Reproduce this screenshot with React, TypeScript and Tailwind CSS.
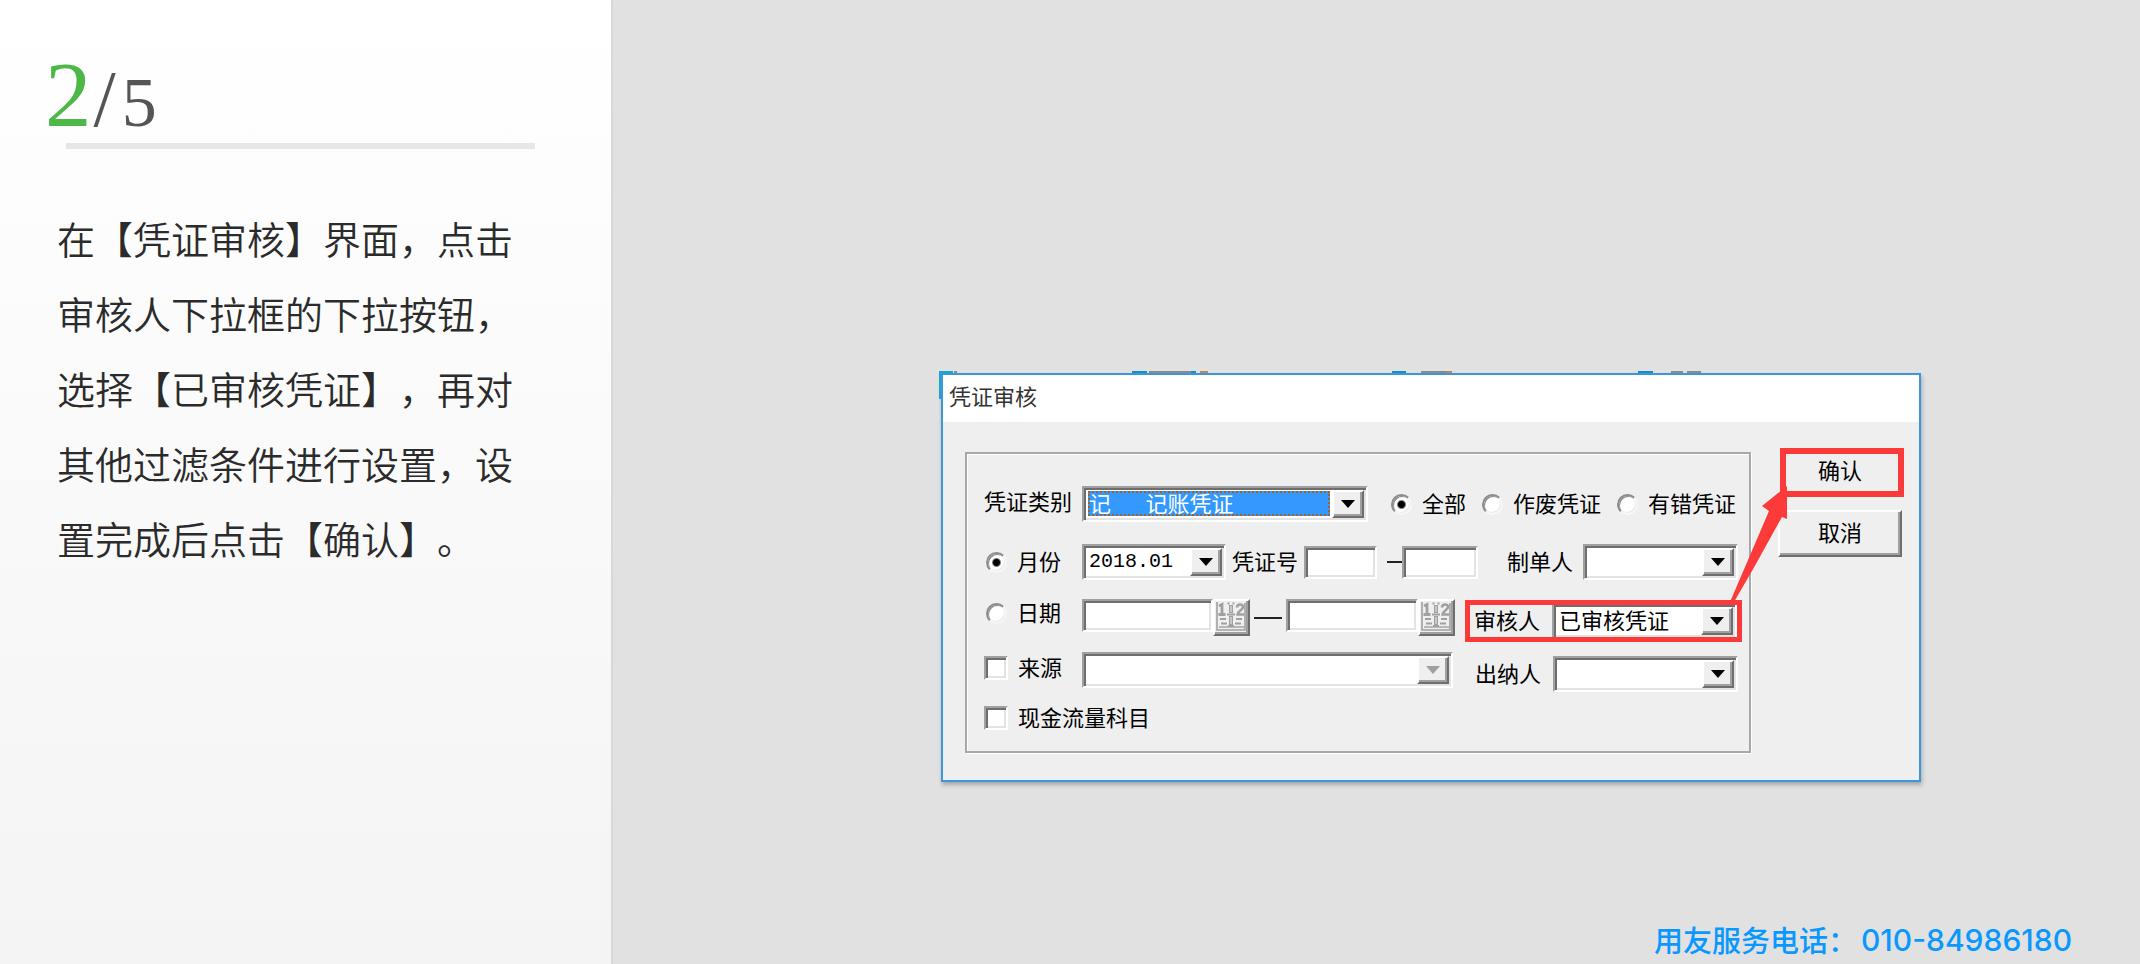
import React from 'react';

const steps = [
  '在【凭证审核】界面，点击',
  '审核人下拉框的下拉按钮，',
  '选择【已审核凭证】，再对',
  '其他过滤条件进行设置，设',
  '置完成后点击【确认】。',
];

const sunken =
  'border-2 border-t-[#a0a0a0] border-l-[#a0a0a0] border-r-white border-b-white shadow-[inset_2px_2px_0_#6e6e6e,inset_-2px_-2px_0_#e3e3e3]';
const raised =
  'bg-[#efefef] border-2 border-t-white border-l-white border-r-[#6e6e6e] border-b-[#6e6e6e] shadow-[inset_-2px_-2px_0_#a0a0a0]';

type ComboProps = {
  label: string;
  width: string;
  value?: string;
  mono?: boolean;
  selected?: boolean;
  disabled?: boolean;
};

function Combo({ label, width, value = '', mono, selected, disabled }: ComboProps) {
  const face = mono ? "font-['Liberation_Mono',monospace] text-[20px]" : 'text-[22px]';
  const fill = selected
    ? 'relative -mt-1.5 -mb-0.5 bg-transparent pr-8 pl-0.5 text-white outline-none'
    : `bg-white pr-8 pl-0.5 text-black outline-none ${mono ? '' : 'pb-1'}`;
  return (
    <span className={`flex h-9 shrink-0 bg-white p-0.5 ${sunken} ${width}`}>
      <span className="relative flex min-w-0 flex-1 pl-px">
        {selected && (
          <span className="absolute top-px right-8.5 bottom-0.5 left-0.5 bg-[#3399ff] outline-2 -outline-offset-2 outline-dotted outline-[#a5601c]" />
        )}
        <select
          aria-label={label}
          disabled={disabled}
          className={`min-w-0 flex-1 appearance-none rounded-none leading-6 disabled:opacity-100 ${face} ${fill}`}
        >
          <option>{value}</option>
        </select>
        <span className={`pointer-events-none absolute inset-y-0 right-0 flex w-8 items-center justify-center ${raised}`}>
          <svg width="14" height="8" viewBox="0 0 14 8" aria-hidden="true">
            <path d="M0 0H14L7 8Z" fill={disabled ? '#a0a0a0' : '#000'} />
          </svg>
        </span>
      </span>
    </span>
  );
}

function TextBox({ label, width }: { label: string; width: string }) {
  return <input aria-label={label} type="text" className={`h-[33px] shrink-0 rounded-none bg-white px-1.5 outline-none ${sunken} ${width}`} />;
}

function Radio({ label, name, checked }: { label: string; name: string; checked?: boolean }) {
  return (
    <label className="flex items-center gap-2.5 whitespace-nowrap">
      <input
        type="radio"
        name={name}
        defaultChecked={checked}
        className="size-[21px] shrink-0 appearance-none rounded-full border-2 border-t-[#8c8c8c] border-r-[#f6f6f6] border-b-[#f6f6f6] border-l-[#8c8c8c] bg-white shadow-[inset_1px_1px_0_#8c8c8c,inset_-1px_-1px_0_#e8e8e8] checked:bg-[radial-gradient(circle,#000_3px,#fff_5px)]"
      />
      <span className="pb-1">{label}</span>
    </label>
  );
}

function Check({ label }: { label: string }) {
  return (
    <label className="flex items-center gap-2.5 whitespace-nowrap">
      <input type="checkbox" className={`size-6 shrink-0 appearance-none rounded-none bg-white ${sunken}`} />
      <span className="pb-1">{label}</span>
    </label>
  );
}

function CalendarButton({ label }: { label: string }) {
  return (
    <button type="button" aria-label={label} className={`size-[37px] shrink-0 ${raised}`}>
      <svg viewBox="0 0 33 33" className="size-[33px]" fill="none" stroke="#a0a0a0" aria-hidden="true">
        <path d="M2 1V29H30V2" strokeWidth="1.6" />
        <path d="M4 26H29" strokeWidth="1.4" />
        <path d="M16 4V12M16 15V24" strokeWidth="4" />
        <path d="M16 5V11M16 16V23" stroke="#efefef" strokeWidth="1" />
        <path d="M12.500 2.500H14.500M17.500 2.500H19.500M12 13.500H20M13 25H19" strokeWidth="2" />
        <path d="M4 5L7 3.500V13M3.500 13.500H10.500" strokeWidth="2.800" />
        <path d="M22 6.500C22 2.500 28 2.500 28 6C28 9 22.500 10 22.500 13.500H29" strokeWidth="2.600" />
        <path d="M5 18H11M6 22.500H12M21 18H27M20 22.500H26" strokeWidth="1.800" />
      </svg>
    </button>
  );
}

function Sidebar() {
  return (
    <aside className="w-[613px] shrink-0 border-r-2 border-[#d8d8d8] bg-linear-to-b from-white to-[#f4f4f4] pt-[51px] pl-[45px]">
      <div className="flex h-[92px] items-baseline font-['Liberation_Serif',serif] leading-[87px] text-[#555]">
        <span className="text-[93px] text-[#4db848]">2</span>
        <span className="pr-1.5 pl-0.5 text-[80px]">/</span>
        <span className="text-[70px]">5</span>
      </div>
      <div className="ml-[21px] h-1.5 w-[469px] bg-[#e6e6e6]" />
      <p className="mt-[51px] ml-3 text-[38px] leading-[75px] font-[350] whitespace-nowrap text-[#2b2b2b] [text-spacing-trim:space-all]">
        {steps.map((line) => (
          <span key={line} className="block">
            {line}
          </span>
        ))}
      </p>
    </aside>
  );
}

function BackgroundFragments() {
  return (
    <svg className="absolute -top-1 -left-1 h-8 w-[780px]" viewBox="0 0 780 32" aria-hidden="true">
      <path d="M0 0H14V3H2V28H0Z" fill="#1fa3cf" />
      <path d="M15 0H18V2H15ZM210 0H256V2H210ZM482 0H513V2H482ZM732 0H744V2H732ZM748 0H762V2H748Z" fill="#8a8a8a" />
      <path d="M193 0H208V2H193ZM252 0H257V2H252ZM453 0H467V2H453ZM699 0H714V2H699Z" fill="#168fc4" />
      <path d="M261 0H269V2H261ZM508 0H513V2H508Z" fill="#c98550" />
    </svg>
  );
}

function FilterDialog() {
  return (
    <section aria-label="凭证审核" className="relative w-full max-w-[980px] border-2 border-[#3c96dc] bg-[#efefef] text-[22px] leading-6 text-black shadow-[1px_3px_4px_rgba(0,0,0,0.25)]">
      <BackgroundFragments />
      <h1 className="flex h-[47px] items-center bg-white pb-2 pl-1.5 text-[22px] text-[#333]">凭证审核</h1>
      <div className="flex items-start pt-[26px] pr-[15px] pb-[27px] pl-[22px]">
        <fieldset className="mt-1 mr-[27px] min-w-0 flex-1 border-2 border-[#a8a8a8] pt-8 pr-[7px] pb-[19px] pl-[17px] shadow-[inset_1px_1px_0_#fff,1px_1px_0_#fff]">
          <div className="flex items-center">
            <span className="w-[98px] shrink-0 pb-2">凭证类别</span>
            <Combo label="凭证类别" width="w-[286px]" value={'记\u00a0\u00a0\u00a0\u00a0\u00a0\u00a0\u00a0记账凭证'} selected />
            <div className="mr-1.5 ml-auto flex gap-4">
              <Radio name="status" label="全部" checked />
              <Radio name="status" label="作废凭证" />
              <Radio name="status" label="有错凭证" />
            </div>
          </div>

          <div className="mt-[22px] flex items-center">
            <div className="w-[98px] shrink-0 pl-0.5">
              <Radio name="period" label="月份" checked />
            </div>
            <Combo label="月份" width="w-36" value="2018.01" mono />
            <span className="mx-1.5 shrink-0 pb-1">凭证号</span>
            <TextBox label="起始凭证号" width="w-[73px]" />
            <span className="ml-2.5 h-0.5 w-[15px] shrink-0 bg-[#222]" />
            <TextBox label="截止凭证号" width="w-[76px]" />
            <div className="mr-1 ml-auto flex items-center gap-2.5">
              <span className="pb-1">制单人</span>
              <Combo label="制单人" width="w-[155px]" />
            </div>
          </div>

          <div className="mt-[19px] flex items-start">
            <div className="w-[98px] shrink-0 pl-0.5">
              <Radio name="period" label="日期" />
            </div>
            <TextBox label="起始日期" width="w-[131px]" />
            <CalendarButton label="选择起始日期" />
            <span className="mx-1 mt-[18px] h-0.5 flex-1 bg-[#222]" />
            <TextBox label="截止日期" width="w-[132px]" />
            <CalendarButton label="选择截止日期" />
            <div className="mt-px ml-2.5 flex h-[42px] shrink-0 items-center overflow-hidden border-[5px] border-[#fc3a3a] pl-1">
              <span className="mr-3 pb-1">审核人</span>
              <Combo label="审核人" width="w-[185px]" value="已审核凭证" />
            </div>
          </div>

          <div className="mt-2.5 flex items-start">
            <div className="w-[98px] shrink-0 pt-0.5">
              <Check label="来源" />
            </div>
            <Combo label="来源" width="w-[371px]" disabled />
            <div className="mt-1 mr-1 ml-auto flex items-center gap-3">
              <span className="pb-1">出纳人</span>
              <Combo label="出纳人" width="w-[185px]" />
            </div>
          </div>

          <div className="mt-3 flex">
            <Check label="现金流量科目" />
          </div>
        </fieldset>

        <div className="flex w-[126px] shrink-0 flex-col gap-[13px]">
          <button type="button" className="ml-0.5 h-[49px] border-[6px] border-[#fc3a3a] bg-[#efefef] pr-1 pb-2">
            确认
          </button>
          <button type="button" className={`mr-0.5 h-[47px] pb-1.5 ${raised}`}>
            取消
          </button>
        </div>
      </div>

      <svg className="pointer-events-none absolute top-[109px] right-[129px]" width="62" height="118" viewBox="0 0 62 118" aria-hidden="true">
        <path d="M59 2L34 22L41 27L2 118H6L24 87L54 33L59 35Z" fill="#fc3a3a" />
      </svg>
    </section>
  );
}

export default function App() {
  return (
    <div className="flex min-h-screen bg-[#e1e1e1] font-['Noto_Sans_CJK_SC',sans-serif]">
      <Sidebar />
      <main className="flex min-w-0 flex-1 flex-col pt-[373px] pl-[328px]">
        <FilterDialog />
        <footer className="mt-auto flex items-center justify-end pr-[68px] pb-1.5 text-[29px] leading-9 font-medium whitespace-nowrap text-[#0a98ff]">
          用友服务电话：<a href="tel:010-84986180" className="pt-0.5 pl-1 font-['Inter',sans-serif] text-[30px]">010-84986180</a>
        </footer>
      </main>
    </div>
  );
}
